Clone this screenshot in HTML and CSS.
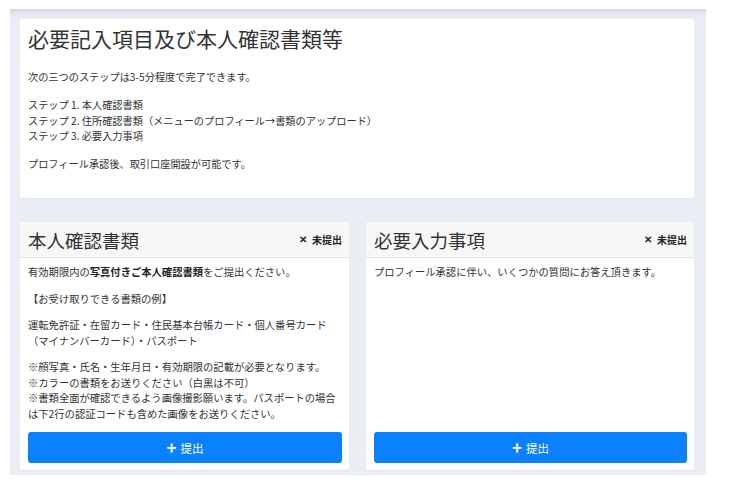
FILE: index.html
```html
<!DOCTYPE html>
<html lang="ja">
<head>
<meta charset="utf-8">
<link rel="stylesheet" href="styles.css">
</head>
<body>
<div class="wrap">
  <section class="intro">
    <h1 class="intro-title">必要記入項目及び本人確認書類等</h1>
    <p>次の三つのステップは3-5分程度で完了できます。</p>
    <p>ステップ 1. 本人確認書類<br>ステップ 2. 住所確認書類（メニューのプロフィール→書類のアップロード）<br>ステップ 3. 必要入力事項</p>
    <p>プロフィール承認後、取引口座開設が可能です。</p>
  </section>
  <div class="cards">
    <section class="card">
      <header class="card-head">
        <h2 class="card-title">本人確認書類</h2>
        <span class="status"><span class="x">✕</span>未提出</span>
      </header>
      <div class="card-body">
        <p>有効期限内の<b>写真付きご本人確認書類</b>をご提出ください。</p>
        <p>【お受け取りできる書類の例】</p>
        <p>運転免許証・在留カード・住民基本台帳カード・個人番号カード<br>（マイナンバーカード）・パスポート</p>
        <p>※顔写真・氏名・生年月日・有効期限の記載が必要となります。<br>※カラーの書類をお送りください（白黒は不可）<br>※書類全面が確認できるよう画像撮影願います。パスポートの場合<br>は下2行の認証コードも含めた画像をお送りください。</p>
        <button class="btn"><span class="plus">+</span> 提出</button>
      </div>
    </section>
    <section class="card">
      <header class="card-head">
        <h2 class="card-title">必要入力事項</h2>
        <span class="status"><span class="x">✕</span>未提出</span>
      </header>
      <div class="card-body">
        <p>プロフィール承認に伴い、いくつかの質問にお答え頂きます。</p>
        <button class="btn"><span class="plus">+</span> 提出</button>
      </div>
    </section>
  </div>
</div>
</body>
</html>
```
FILE: styles.css
```css
* { box-sizing: border-box; }
html, body { margin: 0; padding: 0; background: #fff; }
body {
  font-family: "Noto Sans CJK JP", "Noto Sans", sans-serif;
  color: #333;
  font-size: 10px;
  line-height: 15.5px;
}
.wrap {
  margin: 9px 0 0 10px;
  width: 696px;
  height: 466px;
  background: #eaedf4;
  box-shadow: inset 0 8px 6px -5px #cfd3da;
  padding: 10px 12px 5px 10px;
  display: flex;
  flex-direction: column;
  gap: 24px;
}
.intro {
  background: #fff;
  border-radius: 2px;
  padding: 6px 8px 3px;
  height: 179px;
  box-shadow: 0 1px 1px rgba(0,0,0,0.04);
}
.intro-title {
  font-size: 21px;
  font-weight: 400;
  line-height: 26px;
  margin: 0 0 18px;
  color: #333;
}
.intro p { margin: 0 0 12.5px; font-size: 10.2px; }
.cards {
  display: grid;
  grid-template-columns: 329px 328px;
  column-gap: 17px;
  flex: 1;
}
.card {
  background: #fff;
  border-radius: 2px;
  display: flex;
  flex-direction: column;
  box-shadow: 0 1px 1px rgba(0,0,0,0.05);
}
.card-head {
  height: 36px;
  background: #f7f7f7;
  border-bottom: 1px solid #e4e4e4;
  display: flex;
  align-items: center;
  justify-content: space-between;
  padding: 0 7px 0 8px;
}
.card-title {
  margin: 0;
  font-size: 18.5px;
  font-weight: 400;
  color: #333;
  line-height: 24px;
}
.status {
  font-size: 10px;
  font-weight: 700;
  color: #222;
  display: flex;
  align-items: center;
}
.status .x { font-size: 9.5px; margin-right: 5px; }
.card-body {
  flex: 1;
  display: flex;
  flex-direction: column;
  padding: 6px 7px 7px 8px;
  font-size: 10.3px;
}
.card-body p { margin: 0 0 11px; white-space: nowrap; }
.card-body b { font-weight: 700; color: #222; }
.btn {
  margin-top: auto;
  height: 31px;
  width: 100%;
  border: none;
  border-radius: 3px;
  background: #0a82ff;
  color: #fff;
  font-family: inherit;
  font-size: 11.5px;
  display: flex;
  align-items: center;
  justify-content: center;
  gap: 4px;
}
.plus { font-size: 17px; font-weight: 700; line-height: 1; margin-top: -2px; }
```
